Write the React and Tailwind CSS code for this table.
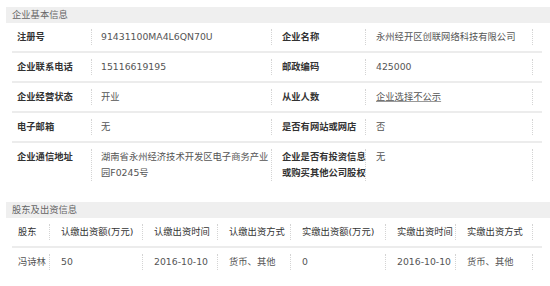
import React from 'react';

const font = { fontFamily: '"DejaVu Sans", "Noto Sans CJK SC", sans-serif' };

const basicRows = [
  { l1: '注册号', v1: '91431100MA4L6QN70U', l2: '企业名称', v2: '永州经开区创联网络科技有限公司' },
  { l1: '企业联系电话', v1: '15116619195', l2: '邮政编码', v2: '425000' },
  { l1: '企业经营状态', v1: '开业', l2: '从业人数', v2: '企业选择不公示', link: true },
  { l1: '电子邮箱', v1: '无', l2: '是否有网站或网店', v2: '否' },
  {
    l1: '企业通信地址',
    v1: '湖南省永州经济技术开发区电子商务产业园F0245号',
    l2: '企业是否有投资信息或购买其他公司股权',
    v2: '无',
  },
];

const holderCols = ['股东', '认缴出资额(万元)', '认缴出资时间', '认缴出资方式', '实缴出资额(万元)', '实缴出资时间', '实缴出资方式'];
const holderRow = ['冯诗林', '50', '2016-10-10', '货币、其他', '0', '2016-10-10', '货币、其他'];

const SectionTitle = ({ children }) => (
  <div className="ml-[6px] h-[16px] bg-[#efefef] pl-[6px] text-[9.3px] leading-[16px] text-[#666]">{children}</div>
);

const App = () => {
  return (
    <div className="w-[550px] h-[286px] overflow-hidden bg-white pt-[7px]" style={font}>
      <SectionTitle>企业基本信息</SectionTitle>
      <div className="ml-[12px] w-[530px]">
        {basicRows.map((row, idx) => (
          <div
            key={idx}
            className={`grid grid-cols-[79px_180px_94px_168px] py-[6px] text-[9.3px] leading-[16px] ${
              idx < basicRows.length - 1 ? 'border-b-2 border-[#ececec]' : ''
            }`}
          >
            <div className="pl-[5px] font-bold text-[#333]">{row.l1}</div>
            <div className="border-l border-dotted border-[#d4d4d4] pl-[9px] text-[#555]">
              <span className="block w-[170px]">{row.v1}</span>
            </div>
            <div className="border-l border-dotted border-[#d4d4d4] pl-[10px] font-bold text-[#333]">
              <span className="block w-[85px]">{row.l2}</span>
            </div>
            <div className="border-x border-dotted border-[#d4d4d4] pl-[10px] text-[#555]">
              <span className={row.link ? 'underline decoration-[#999]' : ''}>{row.v2}</span>
            </div>
          </div>
        ))}
      </div>

      <div className="mt-[15px]">
        <SectionTitle>股东及出资信息</SectionTitle>
      </div>
      <div className="ml-[12px] w-[530px] text-[9.3px] leading-[16px]">
        <div className="grid grid-cols-[37px_93px_75px_73px_95px_70px_78px] border-b-2 border-[#ececec] py-[6px] text-[#333]">
          {holderCols.map((c, i) => (
            <div
              key={i}
              className={`whitespace-nowrap ${i === 0 ? 'pl-[6px]' : 'border-l border-dotted border-[#d4d4d4] pl-[11px]'} ${
                i === holderCols.length - 1 ? 'border-r' : ''
              }`}
            >
              {c}
            </div>
          ))}
        </div>
        <div className="grid grid-cols-[37px_93px_75px_73px_95px_70px_78px] py-[6px] text-[#555]">
          {holderRow.map((c, i) => (
            <div
              key={i}
              className={`whitespace-nowrap ${i === 0 ? 'pl-[6px]' : 'border-l border-dotted border-[#d4d4d4] pl-[11px]'} ${
                i === holderRow.length - 1 ? 'border-r' : ''
              }`}
            >
              {c}
            </div>
          ))}
        </div>
      </div>
    </div>
  );
};

export default App;
